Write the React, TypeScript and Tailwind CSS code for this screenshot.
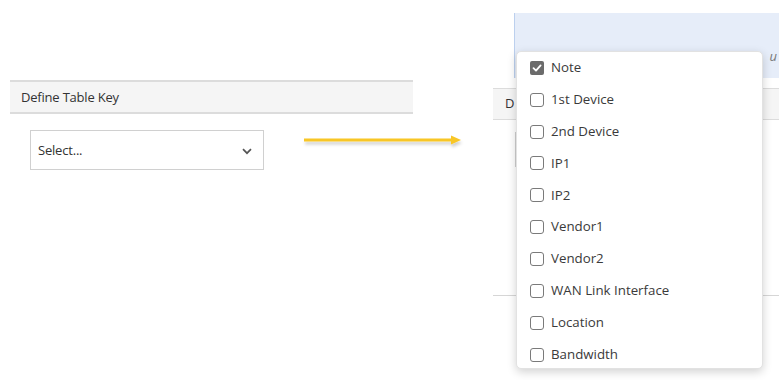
import React from "react";

const items = [
  { label: "Note", checked: true },
  { label: "1st Device" },
  { label: "2nd Device" },
  { label: "IP1" },
  { label: "IP2" },
  { label: "Vendor1" },
  { label: "Vendor2" },
  { label: "WAN Link Interface" },
  { label: "Location" },
  { label: "Bandwidth" },
];

function Box({ checked }: { checked?: boolean }) {
  if (checked) {
    return (
      <span className="w-[14px] h-[14px] rounded-[2px] bg-[#6b6b6b] flex items-center justify-center">
        <svg width="10" height="10" viewBox="0 0 10 10">
          <path d="M1.5 5.2 L4 7.6 L8.6 2.4" stroke="white" strokeWidth="1.8" fill="none" strokeLinecap="round" strokeLinejoin="round" />
        </svg>
      </span>
    );
  }
  return <span className="w-[14px] h-[14px] rounded-[3px] border border-[#7a7a7a] bg-white" />;
}

export default function App() {
  return (
    <div
      className="relative w-[779px] h-[380px] bg-white overflow-hidden flex text-[#333]"
      style={{ fontFamily: '"Open Sans", "Noto Sans", sans-serif' }}
    >
      {/* Left part */}
      <div className="w-[493px] shrink-0 pt-[80px] pl-[10px]">
        <div className="w-[403px] h-[34px] bg-[#f5f5f5] border-y-2 border-[#dcdcdc] flex items-center pl-[11px] pt-[2px] text-[13px] tracking-[-0.2px]">
          Define Table Key
        </div>
        <div className="ml-[20px] mt-[16px] w-[234px] h-[40px] border border-[#d0d0d0] flex items-center justify-between pl-[7px] pr-[11px] pt-[2px] text-[13px] tracking-[-0.2px]">
          <span>Select...</span>
          <svg width="10" height="7" viewBox="0 0 10 7">
            <path d="M1 1.2 L5 5.2 L9 1.2" stroke="#555" strokeWidth="1.7" fill="none" />
          </svg>
        </div>
      </div>

      {/* Right part (background page) */}
      <div className="flex-1 flex flex-col">
        <div className="ml-[21px] mt-[13px] h-[65px] bg-[#e6edf9] border-l border-[#bcd0ee] flex items-end justify-end pb-[12px] pr-[2px]">
          <span className="italic text-[13px] text-[#777]">u</span>
        </div>
        <div className="mt-[10px] h-[32px] bg-[#f5f5f5] border-y border-[#dcdcdc] flex items-center pl-[12px] text-[13px]">
          D
        </div>
        <div className="ml-[22px] mt-[12px] h-[35px] border-l border-[#d0d0d0]" />
        <div className="mt-[128px] border-t border-[#d6d6d6]" />
      </div>

      {/* Arrow annotation */}
      <svg className="absolute left-[300px] top-[131px]" width="168" height="20" viewBox="0 0 168 20">
        <defs>
          <filter id="sh" x="-10%" y="-100%" width="120%" height="300%">
            <feDropShadow dx="1" dy="3" stdDeviation="1.5" floodColor="#000" floodOpacity="0.18" />
          </filter>
        </defs>
        <g filter="url(#sh)">
          <line x1="4" y1="9" x2="153" y2="9" stroke="#f8c626" strokeWidth="3" />
          <path d="M151 4.5 L161 9 L151 13.5 Z" fill="#f8c626" />
        </g>
      </svg>

      {/* Dropdown menu */}
      <div className="absolute left-[516px] top-[51px] w-[247px] h-[318px] bg-white rounded-[5px] border border-[#e2e2e2] shadow-[0_3px_10px_rgba(0,0,0,0.18)]">
        {items.map((it) => (
          <div key={it.label} className="h-[31.85px] flex items-center gap-[7px] pl-[13px] text-[13.3px] text-[#3a3a3a]">
            <Box checked={it.checked} />
            <span className="leading-none">{it.label}</span>
          </div>
        ))}
      </div>
    </div>
  );
}
